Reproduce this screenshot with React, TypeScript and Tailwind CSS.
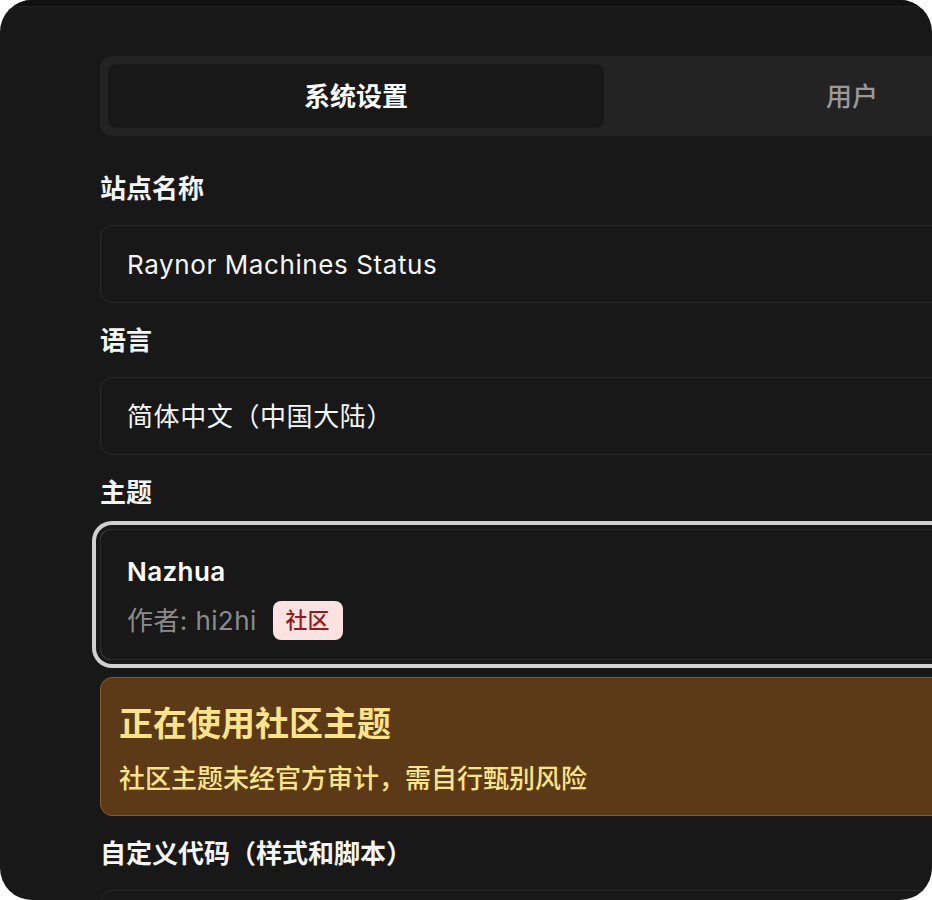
const font = "font-['Inter','Noto_Sans_CJK_SC',sans-serif]"

function Field({ label, children }: { label: string; children: React.ReactNode }) {
  return (
    <div className="flex flex-col gap-[18px]">
      <label className="h-9 text-[26px] leading-9 font-semibold text-[#f5f5f5]">{label}</label>
      {children}
    </div>
  )
}

function TextInput({ value }: { value: string }) {
  return (
    <div className="flex h-[78px] items-center rounded-xl border border-[#2a2a2a] px-[26px] text-[26px] tracking-[0.6px] text-[#f5f5f5]">
      {value}
    </div>
  )
}

export default function App() {
  return (
    <div className={`min-h-[900px] bg-white ${font}`}>
      <div className="flex h-[900px] w-[932px] flex-col overflow-hidden rounded-[32px] bg-[#181818]">
        <div className="h-[6px] shrink-0 bg-[#111111]" />
        <div className="h-px shrink-0 bg-[#232323]" />
        <div className="w-[1008px] shrink-0 pt-[49px] pl-[100px] box-content">
          <div className="grid h-20 grid-cols-2 rounded-xl bg-[#232323] p-2">
            <div className="flex items-center justify-center rounded-lg bg-[#181818] text-[26px] font-semibold text-white">
              系统设置
            </div>
            <div className="flex items-center justify-center text-[26px] font-medium text-[#9a9a9a]">
              用户
            </div>
          </div>

          <div className="mt-[35px] flex flex-col gap-5">
            <Field label="站点名称">
              <TextInput value="Raynor Machines Status" />
            </Field>
            <Field label="语言">
              <TextInput value="简体中文（中国大陆）" />
            </Field>
            <div className="flex flex-col">
              <Field label="主题">
                <div className="h-[131px] rounded-xl border border-[#2a2a2a] px-[26px] pt-6 ring-4 ring-[#d0d0d0] ring-offset-4 ring-offset-[#181818]">
                  <div className="h-9 text-[26px] leading-9 font-semibold tracking-[0.4px] text-white">Nazhua</div>
                  <div className="mt-[10px] flex h-10 items-center gap-4">
                    <span className="text-[26px] tracking-[0.4px] text-[#8c8c8c]">作者: hi2hi</span>
                    <span className="flex h-[39px] items-center rounded-lg bg-[#fde2e2] px-[13px] text-[22px] font-medium text-[#8f1d1d]">
                      社区
                    </span>
                  </div>
                </div>
              </Field>
              <div className="mt-[17px] h-[139px] rounded-xl border border-[#8b5a1f] bg-[#5c3a18] pt-6 pl-[18px] text-[#fbe38a]">
                <div className="h-11 text-[34px] leading-[44px] font-semibold">正在使用社区主题</div>
                <div className="mt-[15px] h-9 text-[26px] leading-9 font-medium">
                  社区主题未经官方审计，需自行甄别风险
                </div>
              </div>
            </div>
            <Field label="自定义代码（样式和脚本）">
              <div className="h-[120px] rounded-xl border border-[#2a2a2a]" />
            </Field>
          </div>
        </div>
      </div>
    </div>
  )
}
